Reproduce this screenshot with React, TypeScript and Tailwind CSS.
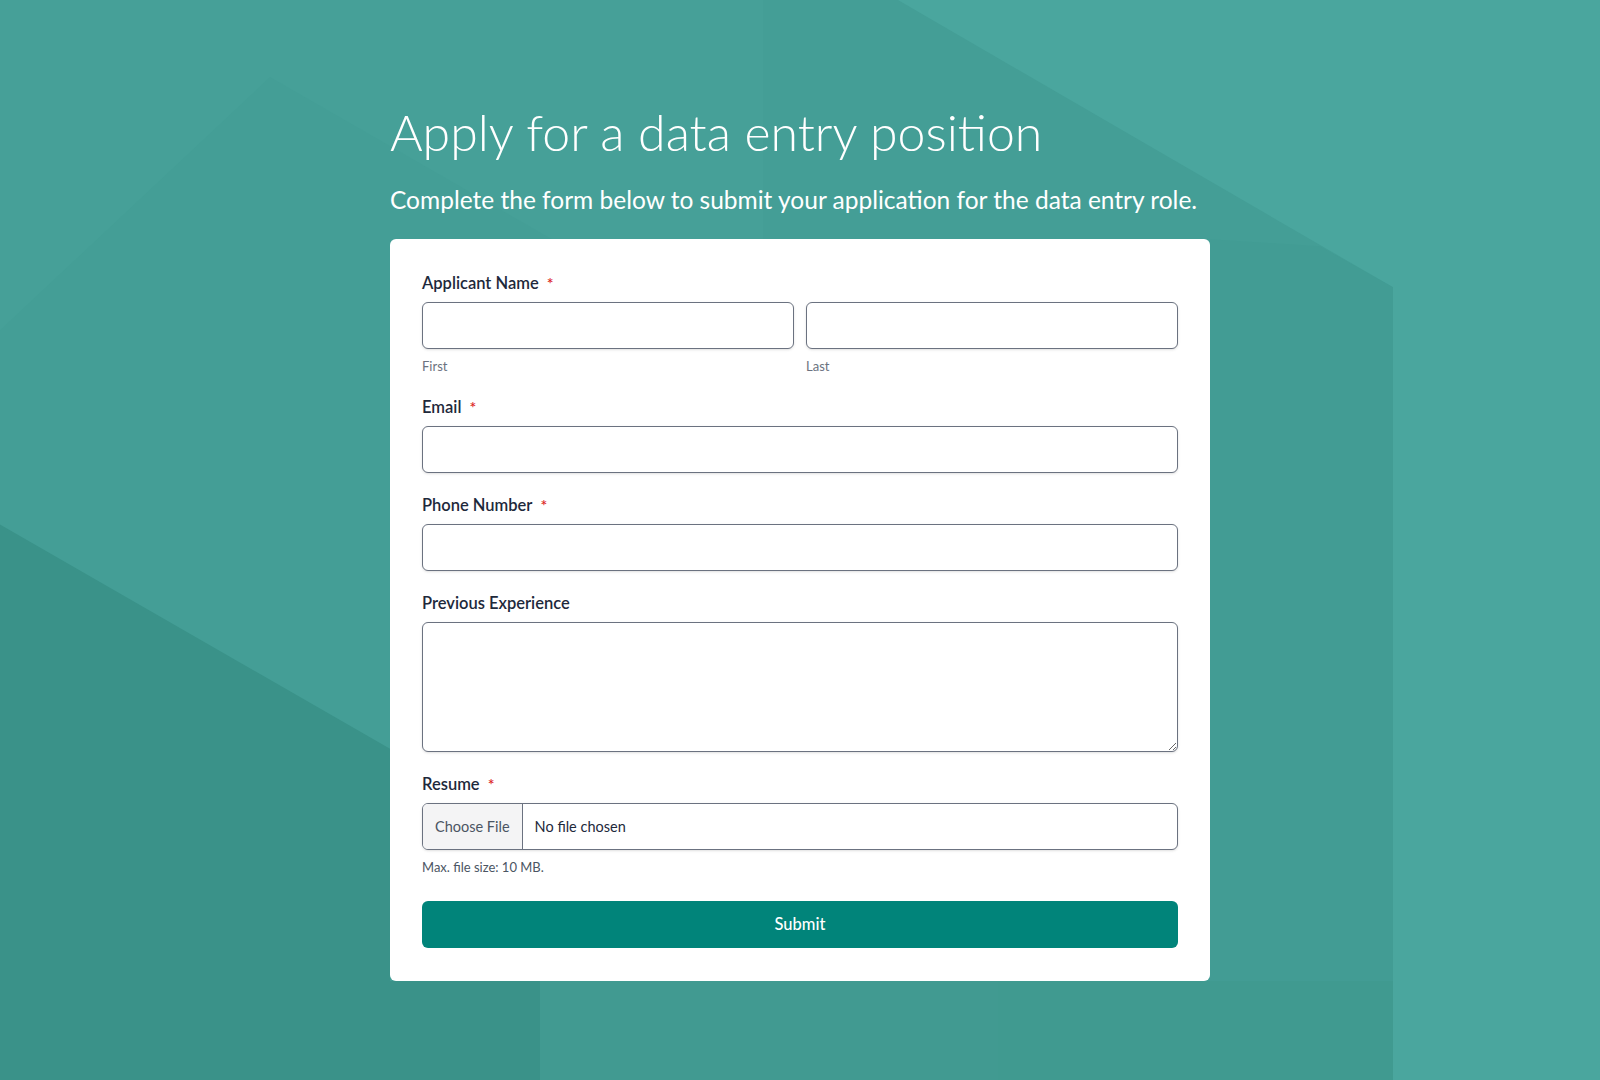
import React from "react";

function Required() {
  return <span className="ml-2 text-[16px] leading-none text-[#dc2626]">*</span>;
}

function FieldLabel({ text, required }: { text: string; required?: boolean }) {
  return (
    <label className="block text-[16.5px] leading-[22px] font-semibold text-[#1e293b]">
      {text}
      {required && <Required />}
    </label>
  );
}

const inputClass =
  "block w-full h-[47px] rounded-md border border-[#6b7280] bg-white px-3 text-[15px] text-[#1e293b] shadow-sm outline-none";

function Background() {
  // low-poly backdrop behind the form
  return (
    <svg
      className="absolute inset-0 h-full w-full"
      viewBox="0 0 1600 1080"
      preserveAspectRatio="none"
    >
      <rect width="1600" height="1080" fill="#449e96" />
      <polygon points="0,0 763,0 763,239 552,239 270,77 0,330" fill="#46a098" />
      <polygon points="898,0 1600,0 1600,1080 1393,1080 1393,287" fill="#4aa69e" />
      <polygon points="1210,239 1320,246 1393,287 1393,1080 1210,1080" fill="#429c94" />
      <polygon points="0,524 390,748 390,980 540,980 540,1080 0,1080" fill="#3a9289" />
      <polygon points="540,980 998,980 998,1080 540,1080" fill="#419a91" />
      <polygon points="998,980 1393,980 1393,1080 998,1080" fill="#409a90" />
    </svg>
  );
}

export default function App() {
  return (
    <div className="relative min-h-screen w-full overflow-hidden font-['Lato','Noto_Sans',sans-serif]">
      <Background />
      <div className="relative mx-auto w-[820px] pt-[102px] pb-[100px]">
        <h1 className="text-[50px] leading-[60px] font-light text-white">
          Apply for a data entry position
        </h1>
        <p className="mt-[22px] text-[24.5px] leading-[32px] font-normal text-white">
          Complete the form below to submit your application for the data entry role.
        </p>

        <form className="mt-[23px] rounded-md bg-white px-8 pt-[33px] pb-[33px]">
          <FieldLabel text="Applicant Name" required />
          <div className="mt-[8px] grid grid-cols-2 gap-3">
            <div>
              <input className={inputClass} type="text" />
              <div className="mt-2 text-[13px] leading-[18px] text-[#6b7280]">First</div>
            </div>
            <div>
              <input className={inputClass} type="text" />
              <div className="mt-2 text-[13px] leading-[18px] text-[#6b7280]">Last</div>
            </div>
          </div>

          <div className="mt-[21px]">
            <FieldLabel text="Email" required />
            <input className={`${inputClass} mt-[8px]`} type="email" />
          </div>

          <div className="mt-[21px]">
            <FieldLabel text="Phone Number" required />
            <input className={`${inputClass} mt-[8px]`} type="tel" />
          </div>

          <div className="mt-[21px]">
            <FieldLabel text="Previous Experience" />
            <textarea className="mt-[8px] block h-[130px] w-full rounded-md border border-[#6b7280] bg-white px-3 py-2 text-[15px] shadow-sm outline-none" />
          </div>

          <div className="mt-[21px]">
            <FieldLabel text="Resume" required />
            <div className="mt-[8px] flex h-[47px] w-full overflow-hidden rounded-md border border-[#6b7280] bg-white shadow-sm">
              <span className="flex items-center border-r border-[#6b7280] bg-[#f4f4f5] px-3 text-[14.5px] text-[#4b5563]">
                Choose File
              </span>
              <span className="flex items-center pl-3 text-[14.5px] text-[#1e293b]">
                No file chosen
              </span>
            </div>
            <div className="mt-2 text-[13px] leading-[18px] text-[#4b5563]">
              Max. file size: 10 MB.
            </div>
          </div>

          <button
            type="button"
            className="mt-[25px] block h-[47px] w-full rounded-md bg-[#01847a] text-[16.5px] font-medium text-white"
          >
            Submit
          </button>
        </form>
      </div>
    </div>
  );
}
